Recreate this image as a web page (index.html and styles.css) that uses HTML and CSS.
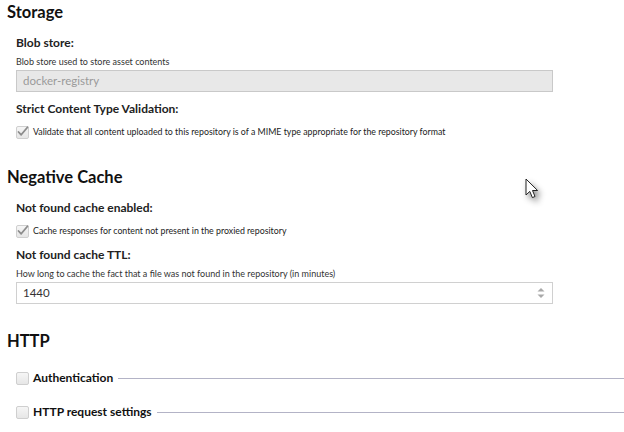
FILE: index.html
```html
<!DOCTYPE html>
<html>
<head>
<meta charset="utf-8">
<link rel="stylesheet" href="styles.css">
</head>
<body>
<div class="page">
  <section class="section">
    <h2 class="heading">Storage</h2>
    <div class="label gap-a">Blob store:</div>
    <div class="help">Blob store used to store asset contents</div>
    <div class="input input-disabled">docker-registry</div>
    <div class="label gap-b">Strict Content Type Validation:</div>
    <div class="check-row">
      <span class="checkbox checked"><svg viewBox="0 0 13 13" width="13" height="13"><path d="M2.5 7 L5.2 9.8 L11.5 2.2" fill="none" stroke="#8c8c8c" stroke-width="1.8" stroke-linecap="round" stroke-linejoin="round"/></svg></span>
      <span class="check-text">Validate that all content uploaded to this repository is of a MIME type appropriate for the repository format</span>
    </div>
  </section>

  <section class="section s2">
    <h2 class="heading">Negative Cache</h2>
    <div class="label gap-a2">Not found cache enabled:</div>
    <div class="check-row">
      <span class="checkbox checked"><svg viewBox="0 0 13 13" width="13" height="13"><path d="M2.5 7 L5.2 9.8 L11.5 2.2" fill="none" stroke="#8c8c8c" stroke-width="1.8" stroke-linecap="round" stroke-linejoin="round"/></svg></span>
      <span class="check-text">Cache responses for content not present in the proxied repository</span>
    </div>
    <div class="label gap-b">Not found cache TTL:</div>
    <div class="help">How long to cache the fact that a file was not found in the repository (in minutes)</div>
    <div class="input input-number">
      <span>1440</span>
      <span class="spinner">
        <svg viewBox="0 0 8 12" width="8" height="12"><path d="M0.5 4.5 L4 1 L7.5 4.5 Z" fill="#a9a9a9"/><path d="M0.5 7.5 L4 11 L7.5 7.5 Z" fill="#a9a9a9"/></svg>
      </span>
    </div>
  </section>

  <section class="section s3">
    <h2 class="heading">HTTP</h2>
    <div class="legend-row">
      <span class="checkbox"></span>
      <span class="legend-text">Authentication</span>
      <span class="legend-line"></span>
    </div>
    <div class="legend-row">
      <span class="checkbox"></span>
      <span class="legend-text">HTTP request settings</span>
      <span class="legend-line"></span>
    </div>
  </section>

  <div class="cursor">
    <svg viewBox="0 0 16 24" width="16" height="24"><path d="M1 1 L1 17 L4.8 13.4 L7.4 19.6 L10 18.5 L7.5 12.5 L12.6 12.5 Z" fill="#fff" stroke="#222" stroke-width="1" stroke-linejoin="miter"/></svg>
  </div>
</div>
</body>
</html>
```

FILE: styles.css
```css
html, body {
  margin: 0;
  padding: 0;
  background: #fff;
}
body {
  font-family: Lato, "Open Sans", "Liberation Sans", sans-serif;
  color: #222;
}
.page {
  position: relative;
  width: 624px;
  height: 432px;
  overflow: hidden;
}
.section {
  display: flex;
  flex-direction: column;
  padding-left: 16px;
}
.heading {
  margin: 2px 0 0 -9px;
  font-size: 16.5px;
  line-height: 20px;
  font-weight: 700;
  color: #111;
}
.s2 { margin-top: 26px; }
.s3 { margin-top: 25px; }
.label {
  font-size: 12px;
  line-height: 14px;
  font-weight: 700;
  color: #222;
}
.gap-a { margin-top: 14px; }
.gap-a2 { margin-top: 14px; }
.gap-b { margin-top: 10px; }
.help {
  margin-top: 7px;
  font-size: 9px;
  line-height: 10px;
  color: #333;
}
.input {
  box-sizing: border-box;
  width: 537px;
  height: 22px;
  margin-top: 3px;
  border: 1px solid #c9c9c9;
  padding: 0 6px;
  font-size: 11.5px;
  line-height: 20px;
}
.input-disabled {
  background: #e8e8e8;
  color: #9a9a9a;
}
.input-number {
  display: flex;
  justify-content: space-between;
  align-items: center;
  background: #fff;
  color: #333;
  border-color: #d0d0d0;
}
.spinner {
  display: flex;
  align-items: center;
  margin-right: 1px;
}
.check-row {
  display: flex;
  align-items: center;
  gap: 4px;
  margin-top: 9px;
  height: 14px;
}
.checkbox {
  box-sizing: border-box;
  display: inline-flex;
  width: 13px;
  height: 13px;
  border: 1px solid #cfcfcf;
  border-radius: 2px;
  background: linear-gradient(#f6f6f6, #e6e6e6);
  flex: none;
  position: relative;
}
.checkbox svg {
  position: absolute;
  left: -1px;
  top: -2px;
}
.check-text {
  font-size: 8.8px;
  line-height: 10px;
  color: #222;
}
.legend-row {
  display: flex;
  align-items: center;
  height: 14px;
  margin-top: 20px;
}
.legend-row .checkbox {
  margin-right: 4px;
}
.legend-text {
  font-size: 12px;
  font-weight: 700;
  line-height: 14px;
  color: #111;
}
.legend-line {
  flex: 1;
  height: 1px;
  background: #b3b3c6;
  margin-left: 5px;
}
.cursor {
  position: absolute;
  left: 525px;
  top: 178px;
  filter: drop-shadow(3px 4px 3px rgba(0,0,0,0.45));
}
```
